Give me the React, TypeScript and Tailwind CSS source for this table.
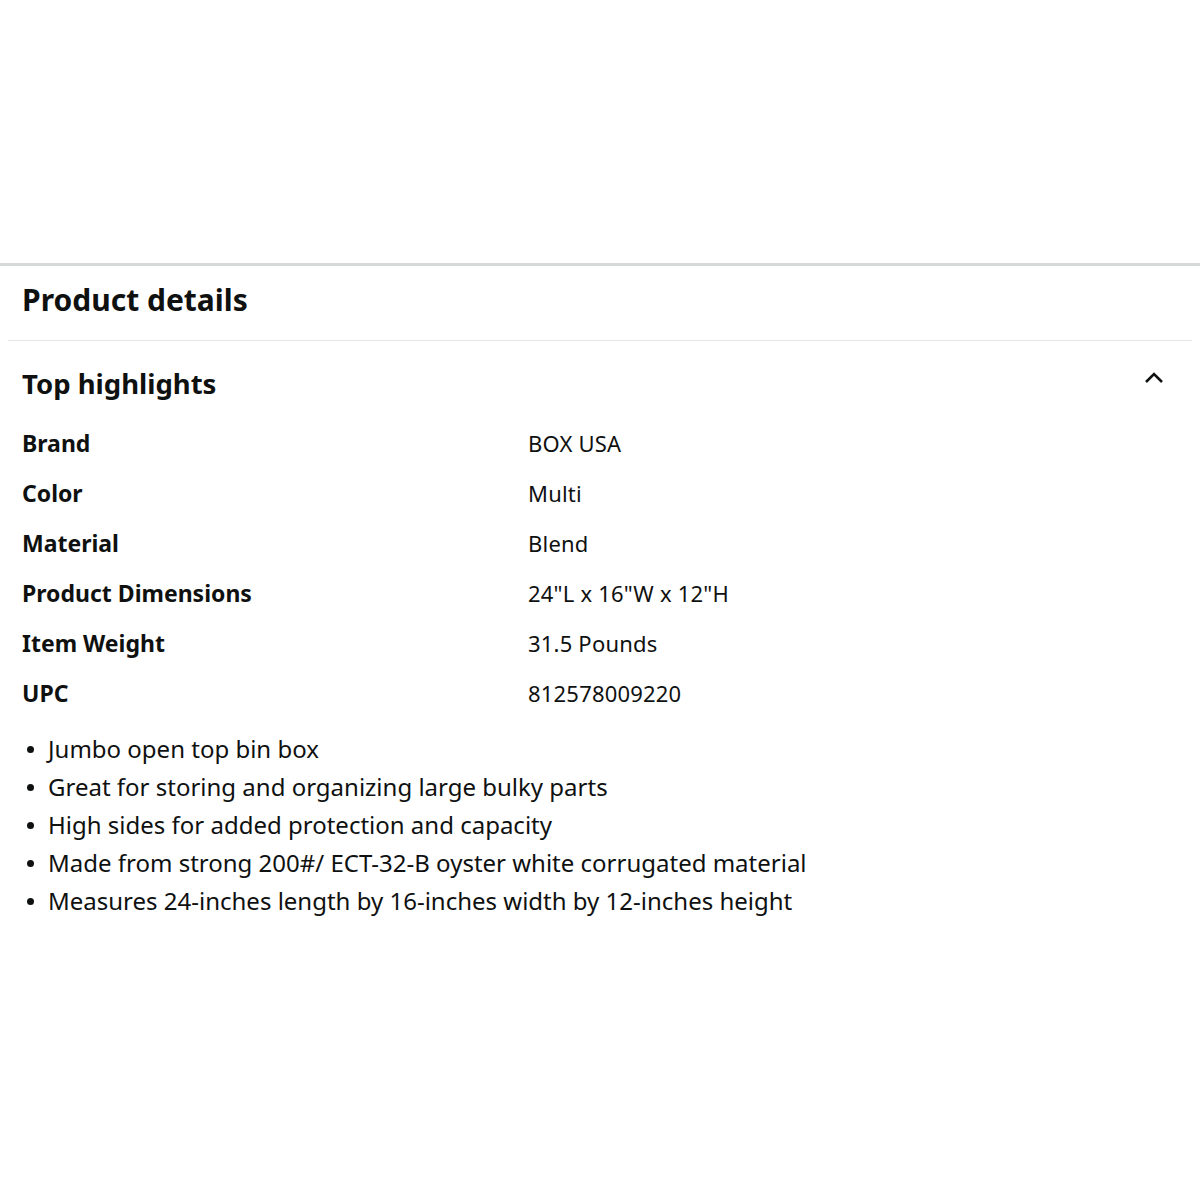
const rows = [
  ['Brand', 'BOX USA'],
  ['Color', 'Multi'],
  ['Material', 'Blend'],
  ['Product Dimensions', '24"L x 16"W x 12"H'],
  ['Item Weight', '31.5 Pounds'],
  ['UPC', '812578009220'],
];

const bullets = [
  'Jumbo open top bin box',
  'Great for storing and organizing large bulky parts',
  'High sides for added protection and capacity',
  'Made from strong 200#/ ECT-32-B oyster white corrugated material',
  'Measures 24-inches length by 16-inches width by 12-inches height',
];

const App = () => {
  return (
    <div className="min-h-[1200px] bg-white pt-[263px] text-[#0f1111] [font-family:'Noto_Sans',sans-serif]">
      <div className="h-[3px] bg-[#d5d9d9]" />
      <h2 className="flex h-[74px] items-center px-[22px] pb-[7px] text-[30px] font-bold">Product details</h2>
      <div className="mx-2 h-px bg-[#e3e6e6]" />
      <div className="flex h-[77px] items-center justify-between pl-[22px] pr-[34px] pt-[9px]">
        <h3 className="text-[27.5px] font-bold">Top highlights</h3>
        <svg width="24" height="24" viewBox="0 0 24 24" fill="none" stroke="#0f1111" strokeWidth="2.5" className="-mt-[12px]">
          <path d="M4 16 L12 8 L20 16" />
        </svg>
      </div>
      <div className="flex flex-col px-[22px]">
        {rows.map(([k, v]) => (
          <div key={k} className="flex h-[50px] items-center">
            <div className="w-[506px] text-[23px] font-bold">{k}</div>
            <div className="text-[22px] tracking-[0.2px]">{v}</div>
          </div>
        ))}
      </div>
      <ul className="mt-[12px] flex flex-col pl-[27px] text-[24px]">
        {bullets.map((b) => (
          <li key={b} className="flex h-[38px] items-center">
            <span className="mr-[14px] h-[7px] w-[7px] shrink-0 rounded-full bg-[#0f1111]" />
            {b}
          </li>
        ))}
      </ul>
    </div>
  );
};

export default App;
